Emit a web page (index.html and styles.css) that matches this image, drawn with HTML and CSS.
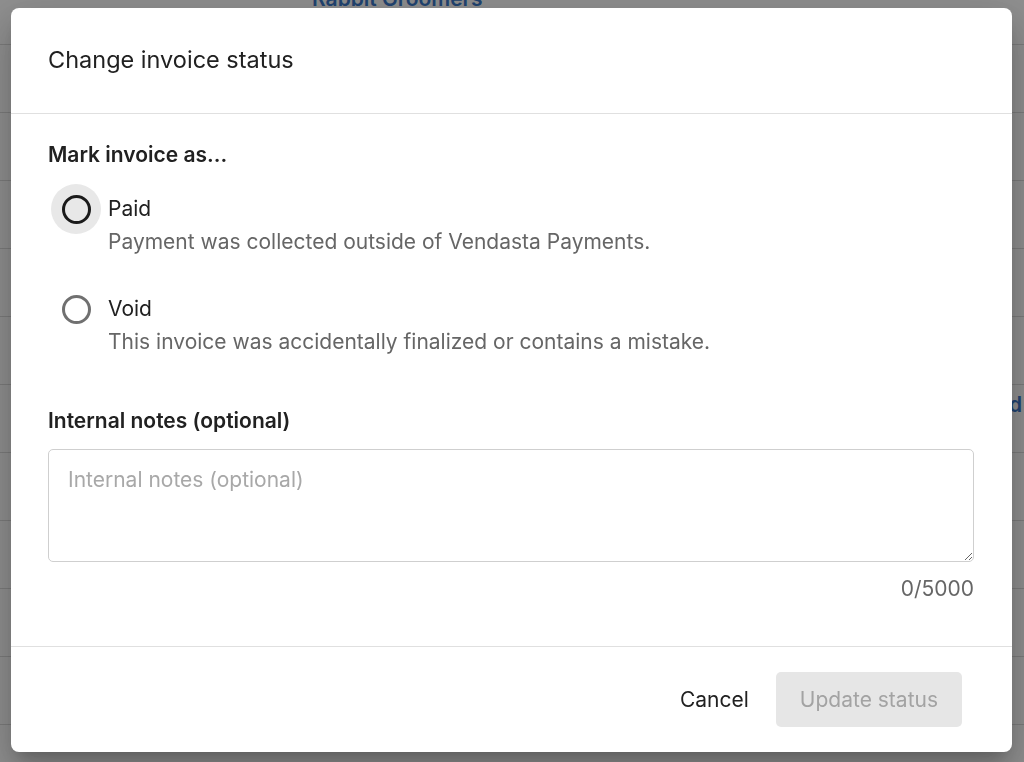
FILE: index.html
```html
<!DOCTYPE html>
<html>
<head>
    <meta charset="utf-8">
    <title>Invoices</title>
    <link rel="stylesheet" href="styles.css">
</head>
<body>
    <!-- invoice list behind the dialog -->
    <div class="page">
        <div class="row"><span class="cell"></span><span class="cell link">Rabbit Groomers</span><span class="cell status"></span></div>
        <div class="row"><span class="cell"></span><span class="cell link"></span><span class="cell status"></span></div>
        <div class="row"><span class="cell"></span><span class="cell link"></span><span class="cell status"></span></div>
        <div class="row"><span class="cell"></span><span class="cell link"></span><span class="cell status"></span></div>
        <div class="row"><span class="cell"></span><span class="cell link"></span><span class="cell status"></span></div>
        <div class="row"><span class="cell"></span><span class="cell link"></span><span class="cell status"></span></div>
        <div class="row"><span class="cell"></span><span class="cell link"></span><span class="cell status link">Paid</span></div>
        <div class="row"><span class="cell"></span><span class="cell link"></span><span class="cell status"></span></div>
        <div class="row"><span class="cell"></span><span class="cell link"></span><span class="cell status"></span></div>
        <div class="row"><span class="cell"></span><span class="cell link"></span><span class="cell status"></span></div>
        <div class="row"><span class="cell"></span><span class="cell link"></span><span class="cell status"></span></div>
        <div class="row"><span class="cell"></span><span class="cell link"></span><span class="cell status"></span></div>
    </div>

    <div class="overlay">
        <div class="dialog">
            <div class="dialog-header">
                <h2 class="dialog-title">Change invoice status</h2>
            </div>

            <div class="dialog-body">
                <div class="field-label">Mark invoice as...</div>

                <div class="radio-group">
                    <label class="option">
                        <span class="radio focused"><input type="radio" name="status" value="paid"></span>
                        <span class="option-text">
                            <span class="option-label">Paid</span>
                            <span class="option-hint">Payment was collected outside of Vendasta Payments.</span>
                        </span>
                    </label>
                    <label class="option">
                        <span class="radio"><input type="radio" name="status" value="void"></span>
                        <span class="option-text">
                            <span class="option-label">Void</span>
                            <span class="option-hint">This invoice was accidentally finalized or contains a mistake.</span>
                        </span>
                    </label>
                </div>

                <div class="field-label notes-label">Internal notes (optional)</div>
                <textarea class="notes" placeholder="Internal notes (optional)" maxlength="5000"></textarea>
                <div class="counter">0/5000</div>
            </div>

            <div class="dialog-footer">
                <button class="btn btn-text">Cancel</button>
                <button class="btn btn-primary" disabled>Update status</button>
            </div>
        </div>
    </div>
</body>
</html>
```

FILE: styles.css
```css
html, body {
    margin: 0;
    height: 100%;
    overflow: hidden;
}

body {
    background: #fff;
    font-family: Inter, "Noto Sans", sans-serif;
    color: #212121;
}

/* list underneath */
.page {
    margin-top: -21px;
}
.row {
    display: grid;
    grid-template-columns: 312px 1fr auto;
    height: 68px;
    box-sizing: border-box;
    border-bottom: 1px solid #dcdcdc;
}
.row:first-child {
    height: 66px;
}
.cell {
    padding-top: 8px;
    font-size: 21px;
    line-height: 24px;
}
.link {
    color: #3a78c9;
    font-weight: 600;
}
.status {
    padding-right: 2px;
}

/* dialog */
.overlay {
    position: fixed;
    inset: 0;
    padding-right: 1px;
    background: rgba(0, 0, 0, 0.44);
    display: flex;
    align-items: center;
    justify-content: center;
}
.dialog {
    width: 1001px;
    margin-top: -2px;
    background: #fff;
    border-radius: 8px;
    box-shadow: 0 11px 15px -7px rgba(0, 0, 0, .2),
                0 24px 38px 3px rgba(0, 0, 0, .14),
                0 9px 46px 8px rgba(0, 0, 0, .12);
}
.dialog-header {
    height: 105px;
    display: flex;
    align-items: center;
    padding: 0 38px 0 37px;
    border-bottom: 1px solid #e0e0e0;
}
.dialog-title {
    margin: -2px 0 0;
    font-size: 23.5px;
    font-weight: 400;
}

.dialog-body {
    padding: 29px 38px 45px 37px;
}
.field-label {
    font-size: 21px;
    line-height: 24px;
    font-weight: 600;
}
.notes-label {
    margin-top: 52px;
}

.radio-group {
    display: flex;
    flex-direction: column;
    gap: 37px;
    margin-top: 27px;
}
.option {
    display: flex;
    cursor: pointer;
}
.radio {
    width: 60px;
    height: 30px;
    flex: none;
    position: relative;
}
.radio input {
    appearance: none;
    -webkit-appearance: none;
    margin: 0;
    position: absolute;
    left: 14px;
    top: 1px;
    width: 29px;
    height: 29px;
    box-sizing: border-box;
    border: 3px solid #707070;
    border-radius: 50%;
    background: transparent;
}
.radio.focused::before {
    content: "";
    position: absolute;
    left: 3px;
    top: -10px;
    width: 50px;
    height: 50px;
    border-radius: 50%;
    background: #e8e8e8;
}
.radio.focused input {
    border-color: #1a1a1a;
}
.option-text {
    display: flex;
    flex-direction: column;
    gap: 3px;
}
.option-label {
    font-size: 21px;
    line-height: 30px;
}
.option-hint {
    font-size: 21px;
    line-height: 30px;
    color: #666;
}

.notes {
    display: block;
    width: 100%;
    height: 113px;
    margin-top: 16px;
    box-sizing: border-box;
    padding: 16px 19px;
    border: 1px solid #cfcfcf;
    border-radius: 5px;
    font-family: inherit;
    font-size: 21px;
    line-height: 28px;
    color: #212121;
    outline: none;
}
.notes::placeholder {
    color: #a8a8a8;
}
.counter {
    margin-top: 15px;
    text-align: right;
    font-size: 21px;
    line-height: 24px;
    color: #666;
}

.dialog-footer {
    display: flex;
    justify-content: flex-end;
    align-items: center;
    gap: 3px;
    padding: 25px 50px 25px 37px;
    border-top: 1px solid #e0e0e0;
}
.btn {
    height: 55px;
    padding: 0 24px;
    border: none;
    border-radius: 5px;
    background: transparent;
    font-family: inherit;
    font-size: 21px;
    color: #212121;
    cursor: pointer;
}
.btn-primary {
    background: #e6e6e6;
    color: #a3a3a3;
    cursor: default;
}
```
